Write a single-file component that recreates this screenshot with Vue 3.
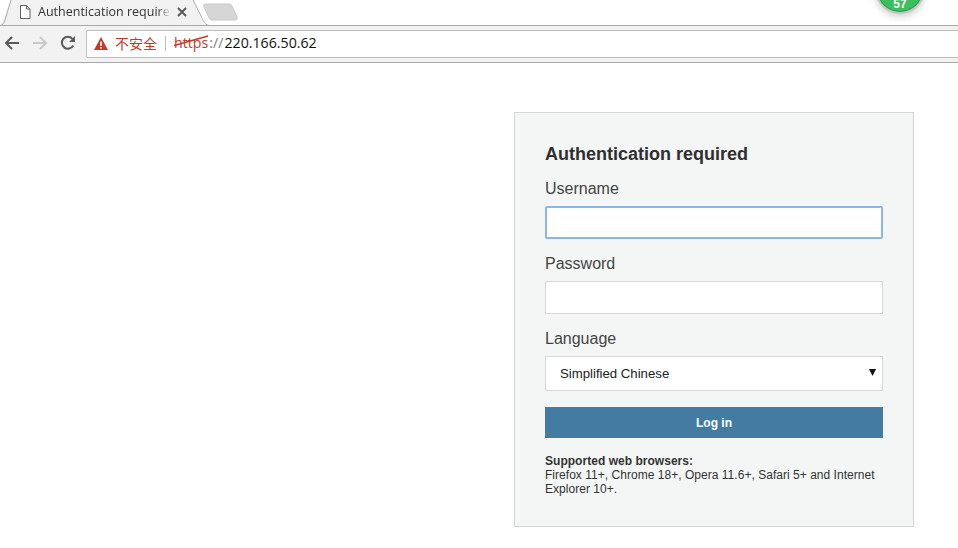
<script setup>
const browsers = 'Firefox 11+, Chrome 18+, Opera 11.6+, Safari 5+ and Internet Explorer 10+.'
</script>

<template>
  <div class="page">
    <header class="chrome">
      <div class="tabstrip">
        <svg class="tabshape" width="240" height="26" viewBox="0 0 240 26">
          <path d="M11 -1 L192 -1 L204 25 L1 25 Z" fill="#f2f2f2" />
          <path d="M11 0 L5 20 C4 23 3 25 0 25.5" fill="none" stroke="#a9a9a9" />
          <path d="M193 0 L204 22 C205 24 207 25 209 25.5 L240 25.5" fill="none" stroke="#a9a9a9" />
          <path d="M205 4 H229 Q231 4 232 6 L237 17 Q238 20 235 20 H212 Q210 20 209 18 L204 7 Q203 4 205 4 Z" fill="#d6d6d6" stroke="#c8c8c8" />
        </svg>
        <svg class="docicon" width="12" height="14" viewBox="0 0 12 14">
          <path d="M1.5 .5 H7.5 L11 4 V13.5 H1.5 Z M7.5 .5 V4 H11" fill="#fff" stroke="#5f6368" />
        </svg>
        <span class="tabtitle">Authentication required</span>
        <svg class="tabclose" width="10" height="10" viewBox="0 0 10 10">
          <path d="M1 1 L9 9 M9 1 L1 9" stroke="#5a5a5a" stroke-width="2" />
        </svg>
      </div>
      <div class="toolbar">
        <svg class="navicon" width="16" height="16" viewBox="0 0 16 16">
          <path d="M15 8 H2 M8 2 L2 8 L8 14" fill="none" stroke="#5a5a5a" stroke-width="2" />
        </svg>
        <svg class="navicon" width="16" height="16" viewBox="0 0 16 16">
          <path d="M1 8 H14 M8 2 L14 8 L8 14" fill="none" stroke="#c9c9c9" stroke-width="2" />
        </svg>
        <svg class="navicon" width="16" height="16" viewBox="0 0 16 16">
          <path d="M13.2 10.5 A6 6 0 1 1 12.4 3.8" fill="none" stroke="#5a5a5a" stroke-width="2" />
          <path d="M15 1 V7 H9 Z" fill="#5a5a5a" />
        </svg>
        <div class="omnibox">
          <svg class="warn" width="14" height="13" viewBox="0 0 14 13">
            <path d="M7 0 L14 13 H0 Z" fill="#c5392b" />
            <rect x="6.2" y="4.5" width="1.6" height="4.5" fill="#fff" />
            <rect x="6.2" y="10" width="1.6" height="1.6" fill="#fff" />
          </svg>
          <span class="insecure">不安全</span>
          <span class="sep"></span>
          <span class="scheme">https<svg class="strike" width="36" height="12" viewBox="0 0 36 12"><path d="M0 10.5 L34 1" stroke="#c5392b" stroke-width="1.5" /></svg></span><span class="slashes">://</span><span class="host">220.166.50.62</span>
        </div>
      </div>
      <div class="badge"><span>57</span></div>
    </header>

    <main class="content">
      <form class="card" @submit.prevent>
        <h1 class="title">Authentication required</h1>
        <label class="label first">Username</label>
        <div class="input focused"></div>
        <label class="label">Password</label>
        <div class="input"></div>
        <label class="label">Language</label>
        <div class="select">
          <span>Simplified Chinese</span>
          <svg class="arrow" width="7" height="7" viewBox="0 0 7 7"><path d="M0 0 H7 L3.5 7 Z" fill="#111" /></svg>
        </div>
        <button class="login" type="button">Log in</button>
        <p class="note"><strong>Supported web browsers:</strong><br />{{ browsers }}</p>
      </form>
    </main>
  </div>
</template>

<style scoped>
.page {
  width: 958px;
  height: 548px;
  overflow: hidden;
  background: #fff;
  font-family: "Liberation Sans", Arial, sans-serif;
  color: #333;
}
.chrome {
  position: relative;
}
.tabstrip {
  position: relative;
  height: 25px;
  display: flex;
  align-items: center;
  background: #fff;
  border-bottom: 1px solid #a9a9a9;
  padding-left: 19px;
}
.tabshape {
  position: absolute;
  left: 0;
  top: 0;
  overflow: visible;
}
.docicon {
  position: relative;
  top: -1px;
  margin-right: 7px;
  flex: none;
}
.tabtitle {
  position: relative;
  top: -1px;
  width: 133px;
  overflow: hidden;
  white-space: nowrap;
  font-family: "Open Sans", "Noto Sans", sans-serif;
  font-size: 12.5px;
  line-height: 18px;
  color: #333;
  -webkit-mask-image: linear-gradient(to right, #000 90%, transparent);
  mask-image: linear-gradient(to right, #000 90%, transparent);
}
.tabclose {
  position: relative;
  top: -1px;
  margin-left: 6px;
}
.toolbar {
  height: 36px;
  display: flex;
  align-items: center;
  gap: 12px;
  padding-left: 4px;
  background: #f2f2f2;
  border-bottom: 1px solid #a9a9a9;
}
.navicon {
  position: relative;
  top: -1px;
  flex: none;
}
.omnibox {
  flex: 1;
  height: 28px;
  margin-left: -2px;
  margin-right: -4px;
  display: flex;
  align-items: center;
  box-sizing: border-box;
  padding-left: 7px;
  padding-bottom: 3px;
  background: #fff;
  border: 1px solid #bdbdbd;
  border-radius: 2px;
  font-family: "Open Sans", "Noto Sans", sans-serif;
  font-size: 14.2px;
}
.warn {
  margin-right: 7px;
  flex: none;
  position: relative;
  top: 1px;
}
.insecure {
  font-family: "Noto Sans CJK SC", sans-serif;
  font-size: 14px;
  color: #c5392b;
}
.sep {
  width: 1px;
  height: 15px;
  margin: 0 8px;
  background: #bdbdbd;
  position: relative;
  top: 1px;
}
.scheme {
  position: relative;
  color: #c5392b;
}
.strike {
  position: absolute;
  left: 0;
  top: 2px;
}
.slashes {
  color: #808080;
  margin-left: 1px;
  margin-right: 1px;
}
.host {
  color: #111;
}
.badge {
  position: absolute;
  left: 875px;
  top: -36px;
  width: 50px;
  height: 50px;
  box-sizing: border-box;
  display: flex;
  align-items: flex-end;
  justify-content: center;
  border-radius: 50%;
  background: #3bbf5e;
  border: 2px solid #c4c4c4;
  box-shadow: 0 3px 7px rgba(0, 0, 0, 0.18), inset 0 0 0 1px #2a9a48;
  color: #fff;
  font-size: 12px;
  font-weight: 700;
  line-height: 13px;
  padding-bottom: 1px;
}
.content {
  padding: 49px 0 0 514px;
}
.card {
  width: 400px;
  height: 415px;
  box-sizing: border-box;
  padding: 30px 30px 0;
  background: #f4f6f6;
  border: 1px solid #d5d5d5;
}
.title {
  margin: 0;
  font-size: 18px;
  line-height: 22px;
  font-weight: 700;
  color: #2f2f2f;
}
.label {
  display: block;
  font-size: 16px;
  line-height: 20px;
  color: #444;
}
.label.first {
  margin-top: 14px;
}
.input {
  height: 33px;
  margin-top: 7px;
  margin-bottom: 15px;
  box-sizing: border-box;
  background: #fff;
  border: 1px solid #d9d9d9;
}
.input.focused {
  border: 2px solid #8fb4ec;
  border-radius: 2px;
}
.select {
  height: 35px;
  margin-top: 7px;
  box-sizing: border-box;
  display: flex;
  align-items: center;
  justify-content: space-between;
  padding: 0 6px 0 14px;
  background: #fff;
  border: 1px solid #d9d9d9;
  font-size: 13.2px;
  color: #222;
}
.arrow {
  margin-top: -2px;
}
.login {
  display: block;
  width: 100%;
  height: 31px;
  margin-top: 16px;
  padding: 0;
  border: 0;
  background: #447ba3;
  color: #fff;
  font-family: inherit;
  font-size: 12px;
  font-weight: 700;
}
.note {
  margin: 16px 0 0;
  font-size: 12px;
  line-height: 14px;
  letter-spacing: 0.03px;
  color: #333;
}
</style>
